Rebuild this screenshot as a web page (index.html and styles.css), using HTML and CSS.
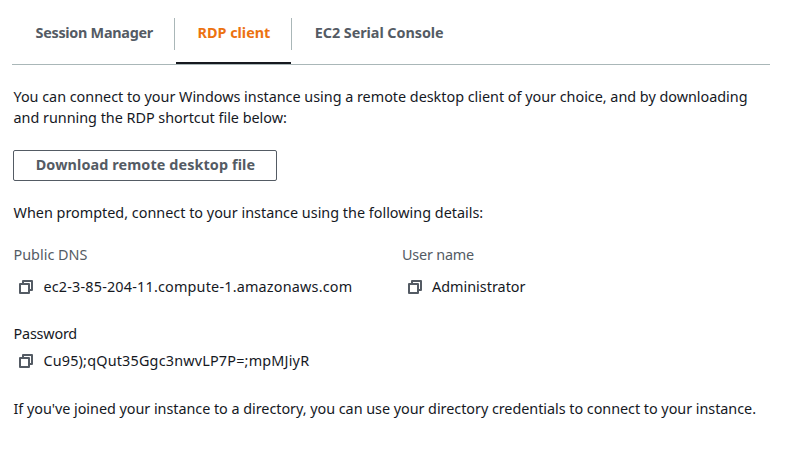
FILE: index.html
```html
<!DOCTYPE html>
<html lang="en">
<head>
<meta charset="utf-8">
<title>Connect to instance</title>
<link rel="stylesheet" href="styles.css">
</head>
<body>
<svg class="defs" width="0" height="0" aria-hidden="true">
  <symbol id="copy" viewBox="0 0 14 14">
    <path d="M1 4h9v9H1z M4 4V1h9v9h-3" fill="none" stroke="currentColor" stroke-width="2" stroke-linejoin="round"/>
  </symbol>
</svg>
<nav class="tabs">
  <a class="tab first">Session Manager</a>
  <a class="tab active">RDP client</a>
  <a class="tab last">EC2 Serial Console</a>
</nav>
<main class="panel">
  <p class="intro">You can connect to your Windows instance using a remote desktop client of your choice, and by downloading<br>and running the RDP shortcut file below:</p>
  <button class="download">Download remote desktop file</button>
  <p class="prompt">When prompted, connect to your instance using the following details:</p>
  <section class="details">
    <div>
      <div class="label">Public DNS</div>
      <div class="value wide"><svg class="icon"><use href="#copy"/></svg><span>ec2-3-85-204-11.compute-1.amazonaws.com</span></div>
    </div>
    <div>
      <div class="label tight">User name</div>
      <div class="value"><svg class="icon"><use href="#copy"/></svg><span>Administrator</span></div>
    </div>
  </section>
  <section class="password">
    <div class="tight">Password</div>
    <div class="value wide pw-value"><svg class="icon"><use href="#copy"/></svg><span>Cu95);qQut35Ggc3nwvLP7P=;mpMJiyR</span></div>
  </section>
  <p class="note">If you've joined your instance to a directory, you can use your directory credentials to connect to your instance.</p>
</main>
</body>
</html>
```
FILE: styles.css
```css
* { box-sizing: border-box; }
body { margin: 0; background: #fff; color: #16191f; font: 14.4px/21px "Noto Sans", "Open Sans", sans-serif; white-space: nowrap; }
p { margin: 0; }
.defs { display: block; height: 0; }
.tabs { display: flex; height: 65px; width: 758px; margin-left: 12px; border-bottom: 1px solid #aab7b8; font-weight: 700; color: #545b64; line-height: 22px; padding-top: 18px; }
.tab { height: 32px; padding: 4px 22px 0; }
.first { width: 163px; padding: 4px 0 0 23.5px; border-right: 1px solid #aab7b8; letter-spacing: -0.28px; }
.active { width: 115px; height: 46px; margin-left: 1px; padding: 4px 0 0 21.5px; color: #ec7211; border-bottom: 2px solid #16191f; }
.last { padding-left: 22.7px; border-left: 1px solid #aab7b8; letter-spacing: -0.05px; }
.panel { padding: 21px 13px 0; }
.intro { height: 64px; padding-left: 0.5px; letter-spacing: -0.02px; }
.download { display: flex; align-items: flex-start; justify-content: flex-start; width: 264px; height: 31px; padding: 0 0 2px 21.7px; background: #fff; border: 1px solid #545b64; border-radius: 2px; color: #545b64; font: inherit; line-height: 27px; font-weight: 700; letter-spacing: 0.1px; }
.prompt { margin-top: 21px; padding-left: 0.5px; }
.details { display: grid; grid-template-columns: 389px 1fr; margin-top: 21px; }
.label { color: #545b64; }
.details > :first-child .label { padding-left: 0.5px; }
.tight { letter-spacing: -0.2px; }
.wide { letter-spacing: 0.19px; }
.wide > span { padding-left: 0.4px; }
.value { display: flex; align-items: center; margin-top: 11px; }
.icon { width: 14px; height: 14px; margin: 0 10px 0 6px; color: #545b64; }
.password { margin-top: 26px; }
.password > .tight { padding-left: 0.5px; }
.pw-value { margin-top: 6px; }
.note { margin-top: 27px; padding-left: 0.5px; letter-spacing: -0.04px; }
```
